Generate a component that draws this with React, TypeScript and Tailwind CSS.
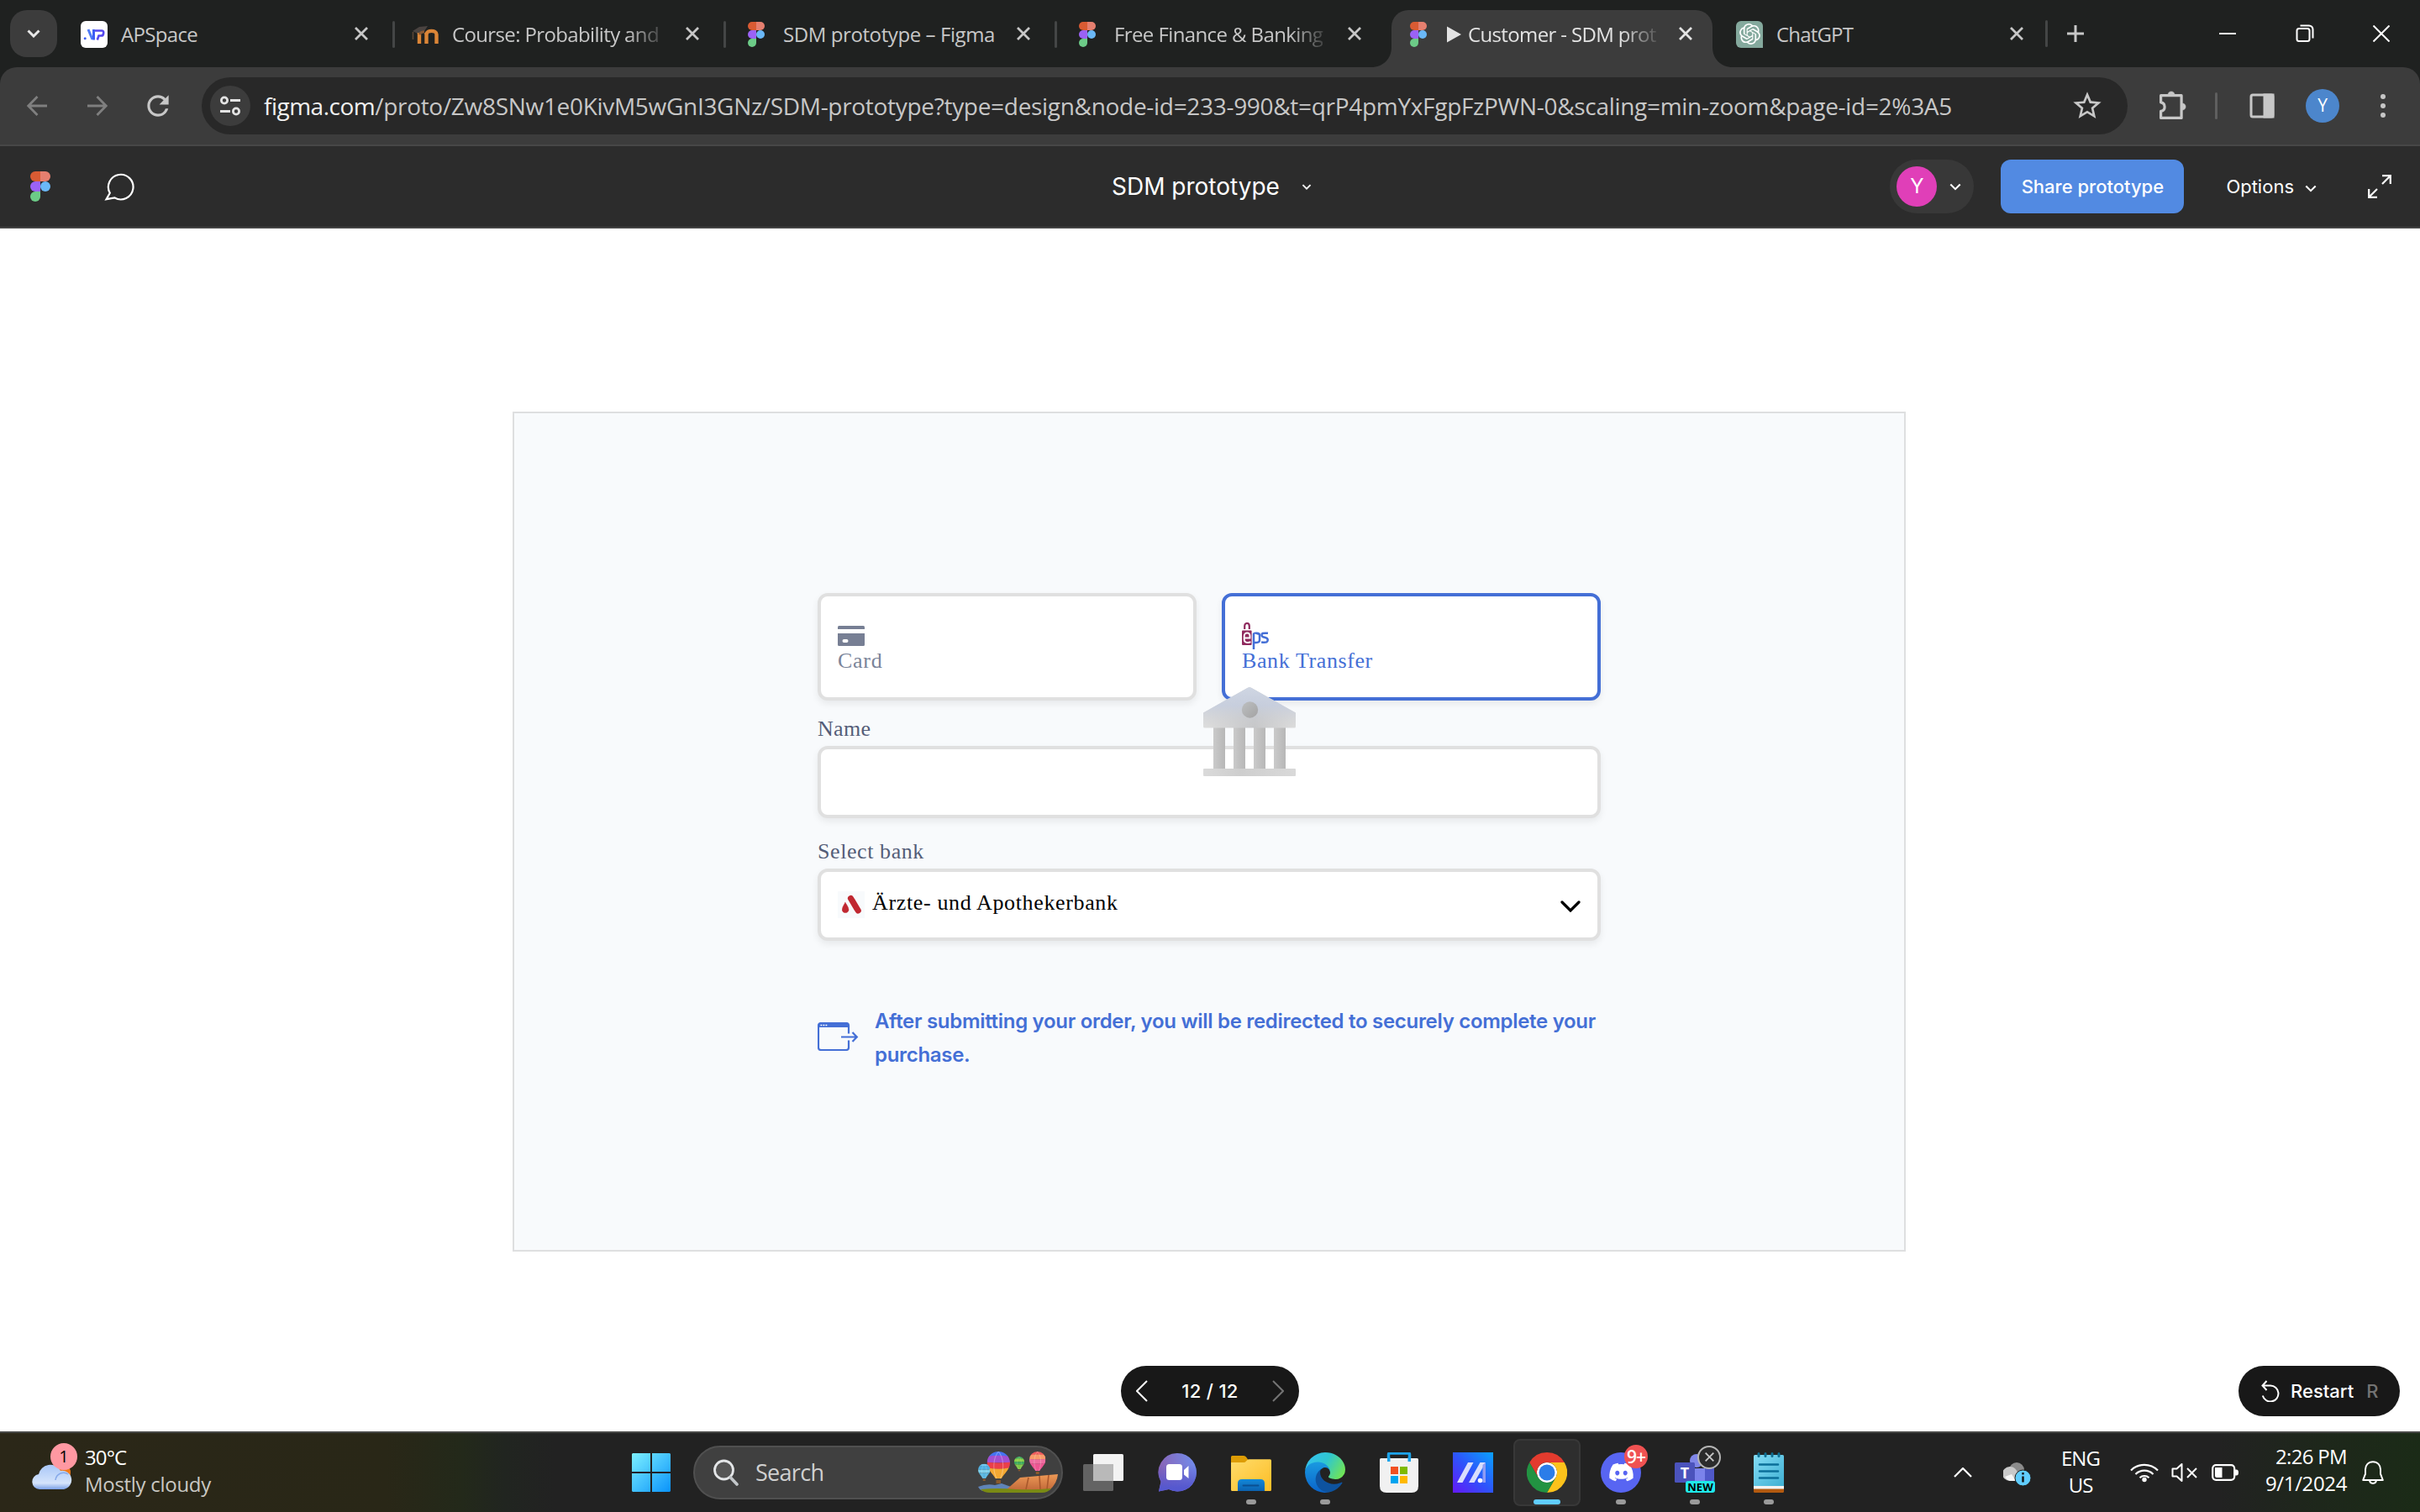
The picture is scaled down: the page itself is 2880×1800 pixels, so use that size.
import type { ReactNode } from "react";
import { SiOpenai } from "react-icons/si";
import { FaDiscord } from "react-icons/fa";
import { MdStarBorder, MdRefresh } from "react-icons/md";

function FigmaLogo({ className = "" }: { className?: string }) {
  return (
    <svg viewBox="0 0 20 30" className={className}>
      <path d="M5 0h5v10H5A5 5 0 0 1 5 0z" fill="#d95b33" />
      <path d="M10 0h5a5 5 0 0 1 0 10h-5z" fill="#e57f6f" />
      <path d="M5 10h5v10H5a5 5 0 0 1 0-10z" fill="#9b62f5" />
      <circle cx="15" cy="15" r="5" fill="#6ab8f7" />
      <path d="M5 20h5v5a5 5 0 1 1-5-5z" fill="#6ccb87" />
    </svg>
  );
}

function ApIcon() {
  return (
    <span className="flex h-8 w-8 items-center justify-center rounded-md bg-white">
      <svg viewBox="0 0 32 32" className="h-8 w-8" fill="none" strokeWidth="3">
        <circle cx="5.2" cy="20.800" r="1.500" fill="#3d5ef5" />
        <path d="M9 10L14 22" stroke="#4f7bf7" />
        <path d="M15.500 10v12.500" stroke="#3d5ef5" />
        <path d="M17 11.500h8.500c2.600 0 2.200 6-.8 6h-3.200L19.800 22.500" stroke="#5548ee" strokeWidth="2.600" />
      </svg>
    </span>
  );
}

function MoodleIcon() {
  return (
    <svg viewBox="0 0 32 32" className="h-8 w-8" fill="none">
      <path d="M1 12L9 7l10-1-4 6-8 3z" fill="#4a4340" />
      <path d="M1.500 13v9" stroke="#5b4636" strokeWidth="1.600" />
      <path d="M9 27V14M17.500 27V14" stroke="#db8537" strokeWidth="4.400" />
      <path d="M9 16q2-3.500 6-3" stroke="#8a5a35" strokeWidth="3" />
      <path d="M17.500 16c0-5.500 12-5.500 12 0v11" stroke="#db8537" strokeWidth="4.400" />
    </svg>
  );
}

function OpenAiIcon() {
  return (
    <span className="flex h-8 w-8 items-center justify-center rounded-md rounded-br-none bg-[#84a99d] text-[25px] text-white">
      <SiOpenai />
    </span>
  );
}

function Cross({ className = "" }: { className?: string }) {
  return (
    <svg viewBox="0 0 16 16" className={className} stroke="currentColor" strokeWidth="2.800" fill="none">
      <path d="M1 1l14 14M15 1L1 15" />
    </svg>
  );
}

function Chevron({ className = "", sw = 2 }: { className?: string; sw?: number }) {
  return (
    <svg viewBox="0 0 16 10" className={className} stroke="currentColor" strokeWidth={sw} fill="none">
      <path d="M1.500 1.500L8 8l6.500-6.500" />
    </svg>
  );
}

function TabFoot({ className = "" }: { className?: string }) {
  return (
    <svg viewBox="0 0 24 24" className={className} fill="#3c3c3c">
      <path d="M24 0v24H0C14 24 24 14 24 0z" />
    </svg>
  );
}

type TabProps = { icon: ReactNode; label: ReactNode; track: string; active?: boolean; fade?: boolean; sep?: boolean };

function Tab({ icon, label, track, active = false, fade = false, sep = false }: TabProps) {
  return (
    <>
      <div
        className={
          "relative flex h-[68px] w-[382px] shrink-0 items-start rounded-t-[20px] pl-4 " +
          (active ? "bg-[#3c3c3c] text-[#e3e3e3]" : "text-[#c7c7c7]")
        }
      >
        {active && <TabFoot className="absolute bottom-0 -left-6 h-6 w-6" />}
        {active && <TabFoot className="absolute -right-6 bottom-0 h-6 w-6 -scale-x-100" />}
        <span className="flex h-[57px] w-8 items-center justify-center">{icon}</span>
        <span
          className={
            "ml-4 w-[254px] text-[24px] leading-[58px] whitespace-nowrap " +
            track +
            (fade ? " [mask-image:linear-gradient(to_right,black_82%,transparent_102%)]" : "")
          }
        >
          {label}
        </span>
        <span className="ml-5 flex h-14 w-6 items-center justify-center">
          <Cross className="h-4 w-4" />
        </span>
      </div>
      <span className="flex h-[57px] w-3 shrink-0 items-center justify-center">
        {sep && <span className="h-8 w-[3px] rounded-full bg-[#444646]" />}
      </span>
    </>
  );
}

function TabStrip() {
  return (
    <div className="flex h-20 bg-[#1f2120] pt-3 pl-3">
      <div className="mr-3 flex h-14 w-14 shrink-0 items-center justify-center rounded-[20px] bg-[#3c3c3c] text-[#e8e8e8]">
        <Chevron className="h-[10px] w-4" sw={3} />
      </div>
      <Tab icon={<ApIcon />} label="APSpace" track="tracking-[-0.680px]" sep />
      <Tab icon={<MoodleIcon />} label="Course: Probability and" track="tracking-[-0.640px]" fade sep />
      <Tab icon={<FigmaLogo className="h-[30px] w-5" />} label="SDM prototype – Figma" track="tracking-[-0.410px]" sep />
      <Tab icon={<FigmaLogo className="h-[30px] w-5" />} label="Free Finance & Banking" track="tracking-[-0.600px]" fade />
      <Tab
        icon={<FigmaLogo className="h-[30px] w-5" />}
        label={
          <span className="flex items-center">
            <svg viewBox="0 0 18 20" className="mr-[8px] ml-[2px] h-5 w-[17px] shrink-0" fill="currentColor">
              <path d="M0 0l18 10L0 20z" />
            </svg>
            Customer - SDM prot
          </span>
        }
        track="tracking-[-0.640px]"
        active
        fade
      />
      <div className="-mr-[2px] flex">
        <Tab icon={<OpenAiIcon />} label="ChatGPT" track="tracking-[-0.830px]" />
      </div>
      <span className="-ml-[8px] mt-3 h-8 w-[3px] rounded-full bg-[#444646]" />
      <span className="flex h-14 w-[66px] items-center justify-center text-[#c7c7c7]">
        <svg viewBox="0 0 20 20" className="h-5 w-5" stroke="currentColor" strokeWidth="3">
          <path d="M10 0v20M0 10h20" />
        </svg>
      </span>
      <div className="ml-auto flex h-14 items-center text-white">
        <svg viewBox="0 0 20 20" className="mr-[71px] h-5 w-5" stroke="currentColor" strokeWidth="2">
          <path d="M0 10h20" />
        </svg>
        <svg viewBox="0 0 22 22" className="mr-[70px] h-[22px] w-[22px]" stroke="currentColor" strokeWidth="2" fill="none">
          <rect x="1.500" y="5" width="15" height="15" rx="2.500" />
          <path d="M5.500 1.500h10.500a4.500 4.500 0 0 1 4.500 4.500v10.500" />
        </svg>
        <svg viewBox="0 0 20 20" className="mr-9 h-5 w-5" stroke="currentColor" strokeWidth="2">
          <path d="M.5.5l19 19M19.500.5l-19 19" />
        </svg>
      </div>
    </div>
  );
}

function Toolbar() {
  return (
    <div className="bg-[#1f2120]">
      <div className="flex h-[94px] items-start rounded-t-[20px] border-b-2 border-[#474747] bg-[#3c3c3c] pt-3">
        <div className="flex h-[68px] w-[240px] items-center pl-8 text-[#c7c7c7]">
          <svg viewBox="0 0 24 24" className="h-6 w-6 text-[#7f7f7f]" stroke="currentColor" strokeWidth="2.800" fill="none">
            <path d="M24 12H2M12.500 1L1.800 12l10.700 11" />
          </svg>
          <svg viewBox="0 0 24 24" className="ml-12 h-6 w-6 text-[#7f7f7f]" stroke="currentColor" strokeWidth="2.800" fill="none">
            <path d="M0 12h22M11.500 1l10.700 11-10.700 11" />
          </svg>
          <MdRefresh className="ml-[41px] h-[38px] w-[38px]" />
        </div>
        <div className="flex h-[68px] w-[2292px] items-center rounded-full bg-[#282828] pl-[10px]">
          <span className="flex h-12 w-12 items-center justify-center rounded-full bg-[#3c3c3c]">
            <svg viewBox="0 0 24 24" className="h-6 w-6" stroke="#e3e3e3" strokeWidth="2.800" fill="none">
              <circle cx="5" cy="5.500" r="3.600" />
              <path d="M12 5.500h12M0 18.500h12" />
              <circle cx="19" cy="18.500" r="3.600" />
            </svg>
          </span>
          <span className="ml-4 text-[28px] leading-[68px] tracking-[-0.306px] whitespace-nowrap text-[#c7c7c7]">
            <span className="tracking-[-0.500px] text-[#f0f0f0]">figma.com</span>
            /proto/Zw8SNw1e0KivM5wGnI3GNz/SDM-prototype?type=design&amp;node-id=233-990&amp;t=qrP4pmYxFgpFzPWN-0&amp;scaling=min-zoom&amp;page-id=2%3A5
          </span>
          <MdStarBorder className="mr-[28px] ml-auto h-10 w-10 text-[#c7c7c7]" />
        </div>
        <div className="flex h-[68px] flex-1 items-center text-[#c7c7c7]">
          <svg viewBox="0 0 36 36" className="ml-[36px] h-9 w-9" stroke="currentColor" strokeWidth="3.200" fill="none">
            <path d="M3.600 5.700h24.500v26.700H3.600v-8c6-1 6-9.500 0-10.500z" strokeLinejoin="round" />
            <path d="M12 5c0-5.500 8-5.500 8 0zM29 15c5.500 0 5.500 8 0 8z" fill="currentColor" strokeWidth="0.500" />
          </svg>
          <span className="ml-8 h-8 w-[3px] rounded-full bg-[#5f5f5f]" />
          <svg viewBox="0 0 30 30" className="ml-[38px] h-[30px] w-[30px]" fill="none" stroke="currentColor" strokeWidth="3">
            <rect x="2" y="2" width="26" height="26" rx="2" />
            <path d="M18 2h10v26H18z" fill="currentColor" />
          </svg>
          <span className="ml-[37px] flex h-10 w-10 items-center justify-center rounded-full bg-[#4c86cc] text-[21px] text-white">Y</span>
          <span className="ml-[49px] flex flex-col gap-[5px]">
            <span className="h-[6px] w-[6px] rounded-full bg-current" />
            <span className="h-[6px] w-[6px] rounded-full bg-current" />
            <span className="h-[6px] w-[6px] rounded-full bg-current" />
          </span>
        </div>
      </div>
    </div>
  );
}

function FigmaHeader() {
  return (
    <div className="flex h-[98px] items-center border-b-2 border-[#444] bg-[#2c2c2c] font-['Inter',sans-serif] text-white">
      <div className="flex w-[1323px] items-center pl-9">
        <FigmaLogo className="h-9 w-6" />
        <svg viewBox="0 0 36 36" className="ml-[64px] h-9 w-9" fill="none" stroke="currentColor" strokeWidth="2.200">
          <path d="M2.500 33.200l4.300-7.400A14.800 14.800 0 1 1 12.500 31.500z" strokeLinejoin="miter" />
        </svg>
      </div>
      <span className="text-[28px] leading-[32px]">SDM prototype</span>
      <Chevron className="ml-[26px] h-[7px] w-[12px]" sw={2.6} />
      <div className="ml-auto flex items-center">
        <div className="flex h-16 w-[100px] items-center rounded-full bg-[#383838] pl-2">
          <span className="flex h-12 w-12 items-center justify-center rounded-full bg-[#e03fb8] text-[24px]">Y</span>
          <Chevron className="ml-[15px] h-[9px] w-[14px]" sw={2.4} />
        </div>
        <div className="ml-8 flex h-16 w-[218px] items-center justify-center rounded-xl bg-[#528ae2] text-[22px] leading-8 font-medium">
          Share prototype
        </div>
        <span className="ml-[50px] text-[22px] leading-8">Options</span>
        <Chevron className="mt-[4px] ml-[13px] h-[9px] w-[14px]" sw={2.4} />
        <svg viewBox="0 0 28 28" className="mr-[34px] ml-[61px] h-7 w-7" fill="none" stroke="currentColor" strokeWidth="2.200">
          <path d="M17 1.200h9.800V11M26.800 1.200L17 11M11 26.800H1.200V17M1.200 26.800L11 17" />
        </svg>
      </div>
    </div>
  );
}

function EpsLogo() {
  return (
    <svg viewBox="0 0 32 32" className="h-8 w-8" fill="none">
      <path d="M3.200 8V4.500C3.200-.2 8.800-.2 8.800 4.500V8" stroke="#8f2a5e" strokeWidth="2.200" />
      <rect x="0" y="9.500" width="11.600" height="17.500" rx="1" fill="#8f2a5e" />
      <path d="M3.200 18.500h6.300v-2.300c0-5-6.800-5-6.800 0v4c0 4.600 5 4.300 7.800 3" stroke="#fff" strokeWidth="1.900" />
      <path d="M14 32V13.500c0-1 7-1.400 7 1.500v6c0 3-3 3.200-6.500 2.800" stroke="#446fd6" strokeWidth="2.500" />
      <path d="M31 12.800c-7-.6-7.500.4-7.500 2.400 0 3.600 7.200 1.500 7.200 5.400 0 3-1 3.600-7.600 3" stroke="#446fd6" strokeWidth="2.500" />
    </svg>
  );
}

function BankIcon({ className = "" }: { className?: string }) {
  return (
    <svg viewBox="0 0 110 106" className={className}>
      <defs>
        <linearGradient id="roofBase" x1="0" x2="1" y1="0" y2="0">
          <stop offset="0" stopColor="#dedede" />
          <stop offset=".55" stopColor="#c6c7c9" />
          <stop offset="1" stopColor="#dcdcdc" />
        </linearGradient>
        <linearGradient id="roofSky" x1="0" x2="0" y1="0" y2="1">
          <stop offset="0" stopColor="#cfd6e3" />
          <stop offset=".45" stopColor="#c6cedf" stopOpacity=".85" />
          <stop offset="1" stopColor="#cfcfcf" stopOpacity="0" />
        </linearGradient>
        <linearGradient id="pillar" x1="0" x2="1" y1="0" y2="0">
          <stop offset="0" stopColor="#cacaca" />
          <stop offset="1" stopColor="#b7b7b7" />
        </linearGradient>
        <linearGradient id="plinth" x1="0" x2="1" y1="0" y2="0">
          <stop offset="0" stopColor="#dadada" />
          <stop offset=".4" stopColor="#cecece" />
          <stop offset="1" stopColor="#d9d9d9" />
        </linearGradient>
        <linearGradient id="knob" x1="0" x2="1" y1="0" y2="1">
          <stop offset="0" stopColor="#bdbfc1" />
          <stop offset="1" stopColor="#a3a3a3" />
        </linearGradient>
      </defs>
      <g fill="url(#pillar)">
        <path d="M12 48h14v49H12z" />
        <path d="M36 48h14v49H36z" />
        <path d="M60 48h14v49H60z" />
        <path d="M84 48h14v49H84z" />
      </g>
      <path d="M0 30.500L53 .800q2-1 4 0L110 30.500V47q0 1.500-1.500 1.500h-107Q0 48.500 0 47z" fill="url(#roofBase)" />
      <path d="M0 30.500L53 .800q2-1 4 0L110 30.500V47q0 1.500-1.500 1.500h-107Q0 48.500 0 47z" fill="url(#roofSky)" />
      <circle cx="55.500" cy="27" r="9.700" fill="url(#knob)" />
      <rect x="0" y="97" width="110" height="9" rx="1" fill="url(#plinth)" />
    </svg>
  );
}

function Payment() {
  return (
    <div className="mx-auto mt-[218px] h-[1000px] w-[1658px] translate-x-[-1px] border-2 border-[#dedfe0] bg-[#f8fafc] pt-[214px] pl-[361px] font-['Liberation_Serif',serif]">
      <div className="relative w-[932px]">
        <div className="flex justify-between">
          <div className="h-32 w-[451px] rounded-xl border-4 border-[#e0e0e0] bg-white pt-[35px] pl-5 shadow-[0_4px_8px_rgba(0,0,0,0.07)]">
            <svg viewBox="0 0 32 24" className="h-6 w-8" fill="#777f94">
              <path d="M1.500 0h29Q32 0 32 1.500V4H0V1.500Q0 0 1.500 0z" />
              <path fillRule="evenodd" d="M0 9h32v13.500q0 1.500-1.500 1.500h-29Q0 24 0 22.500zM7.500 16a2 2 0 0 0 0 4h3a2 2 0 0 0 0-4z" />
            </svg>
            <div className="mt-[2px] text-[26px] leading-8 tracking-[0.700px] text-[#7a8499]">Card</div>
          </div>
          <div className="h-32 w-[451px] rounded-xl border-4 border-[#446fd6] bg-white pt-[31px] pl-5 shadow-[0_4px_8px_rgba(0,0,0,0.07)]">
            <EpsLogo />
            <div className="-mt-[2px] text-[26px] leading-8 tracking-[0.600px] text-[#446fd6]">Bank Transfer</div>
          </div>
        </div>
        <div className="mt-[18px] text-[26px] leading-8 tracking-[0.300px] text-[#545d78]">Name</div>
        <div className="mt-[4px] h-[86px] rounded-xl border-4 border-[#e0e0e0] bg-white shadow-[0_4px_8px_rgba(0,0,0,0.07)]" />
        <BankIcon className="absolute top-[112px] left-[459px] h-[106px] w-[110px]" />
        <div className="mt-[24px] text-[26px] leading-8 tracking-[0.580px] text-[#545d78]">Select bank</div>
        <div className="mt-[4px] flex h-[86px] items-center rounded-xl border-4 border-[#e0e0e0] bg-white pr-5 pl-5 shadow-[0_4px_8px_rgba(0,0,0,0.07)]">
          <span className="flex h-8 w-8 items-center justify-center bg-[#f8fafc]">
            <svg viewBox="0 0 24 24" className="ml-px h-6 w-6" fill="none" stroke="#c02831" strokeLinecap="round">
              <path d="M10.500 4.500L19.200 19" strokeWidth="7.200" />
              <path d="M3.900 9.500q4.100 5.500 4.100 9a4 4 0 0 1-7.800 0q0-3.500 3.700-9z" fill="#c02831" strokeWidth="0.500" />
            </svg>
          </span>
          <span className="mb-[4px] ml-[9px] text-[26px] leading-8 tracking-[0.640px] text-black">Ärzte- und Apothekerbank</span>
          <svg viewBox="0 0 24 14" className="mt-[4px] ml-auto h-[14px] w-6" fill="none" stroke="#000" strokeWidth="3.200" strokeLinecap="round">
            <path d="M2 2l10 10L22 2" />
          </svg>
        </div>
        <div className="mt-[76px] flex items-start">
          <svg viewBox="0 0 50 34" className="mt-[21px] h-[34px] w-[50px] shrink-0" fill="none" stroke="#446fd6" strokeWidth="2.200">
            <path d="M37 13.500V4q0-3-3-3H4Q1 1 1 4v26q0 3 3 3h30q3 0 3-3v-8.500" />
            <path d="M1 1.500h36V6H1z" fill="#446fd6" strokeWidth="0" />
            <path d="M3.500 3.500h1.800M6.500 3.500h1.800M9.500 3.500h1.800" stroke="#fff" strokeWidth="1.600" />
            <path d="M28 17.500h18.500M41.500 12l5.300 5.500-5.300 5.500" />
          </svg>
          <p className="ml-[18px] font-['Inter',sans-serif] text-[24px] leading-10 font-semibold tracking-[-0.300px] whitespace-nowrap text-[#446fd6]">
            After submitting your order, you will be redirected to securely complete your
            <br />
            purchase.
          </p>
        </div>
      </div>
    </div>
  );
}

function Controls() {
  return (
    <div className="mt-auto mb-[18px] flex justify-between pr-6 font-['Inter',sans-serif] text-[22px] leading-[60px] font-medium text-white">
      <div className="ml-[1334px] flex h-[60px] w-[212px] items-center rounded-full bg-[#181818] px-[18px]">
        <svg viewBox="0 0 14 26" className="h-[26px] w-[14px]" stroke="#fff" strokeWidth="2" fill="none">
          <path d="M13 1L1 13l12 12" />
        </svg>
        <span className="mx-auto tracking-[0.300px]">12 / 12</span>
        <svg viewBox="0 0 14 26" className="h-[26px] w-[14px] -scale-x-100" stroke="#737373" strokeWidth="2" fill="none">
          <path d="M13 1L1 13l12 12" />
        </svg>
      </div>
      <div className="flex h-[60px] w-[192px] items-center rounded-full bg-[#181818] pl-[27px]">
        <svg viewBox="0 0 22 26" className="h-[26px] w-[22px]" stroke="#fff" strokeWidth="2" fill="none">
          <path d="M6.500 1L1.500 6.500l5 5.500M1.500 6.500h9.500a9.500 9.500 0 1 1-9.200 12" />
        </svg>
        <span className="ml-[13px]">Restart</span>
        <span className="ml-[15px] text-[#737373]">R</span>
      </div>
    </div>
  );
}

function WeatherIcon() {
  return (
    <svg viewBox="0 0 56 56" className="h-14 w-14" fill="none">
      <defs>
        <linearGradient id="cloud" x1="0" x2="0" y1="0" y2="1">
          <stop offset="0" stopColor="#a9c7f8" />
          <stop offset=".75" stopColor="#d5e4fb" />
          <stop offset="1" stopColor="#7ba0e6" />
        </linearGradient>
      </defs>
      <circle cx="34" cy="34" r="12" fill="#f07a1a" />
      <path d="M9 54a9 9 0 0 1-1-17.900A14 14 0 0 1 34 32a11 11 0 0 1 4 22z" fill="url(#cloud)" />
      <path d="M28 43c1-8 10-11 15-7" stroke="#86a9ea" strokeWidth="1.500" />
    </svg>
  );
}

type BalloonProps = { id: string; x: number; y: number; w: number; h: number; bands: string[] };

function Balloon({ id, x, y, w, h, bands }: BalloonProps) {
  return (
    <svg x={x} y={y} width={w} height={h} viewBox="0 0 20 28" preserveAspectRatio="none">
      <clipPath id={id}>
        <path d="M10 0a10 10 0 0 1 10 10c0 6-5 9-7.500 14h-5C5 19 0 16 0 10A10 10 0 0 1 10 0z" />
      </clipPath>
      <g clipPath={`url(#${id})`}>
        <path d="M0 0h20v4.800q-10-2-20 0z" fill={bands[0]} />
        <path d="M0 4.500q10-2 20 0v5q-10 1-20 0z" fill={bands[1]} />
        <path d="M0 9.400q10 1 20 0v5q-10 2-20 0z" fill={bands[2]} />
        <path d="M0 14.200q10 2 20 0V24H0z" fill={bands[3]} />
        <path d="M10 0c-5 6-5 17-1.500 24M10 0c5 6 5 17 1.500 24" stroke="#fff" strokeOpacity=".3" strokeWidth=".8" fill="none" />
      </g>
      <path d="M8 25h4v3H8z" fill="#8a5a2c" />
    </svg>
  );
}

function BalloonScene() {
  return (
    <svg viewBox="0 0 96 50" className="h-[50px] w-24">
      <defs>
        <linearGradient id="mesa" x1="0" y1="0" x2="0" y2="1">
          <stop offset="0" stopColor="#ee9a56" />
          <stop offset="1" stopColor="#c2693a" />
        </linearGradient>
      </defs>
      <path d="M0 42q10-4 20-2l8-2 14 5-4 4H5Q2 46 0 42z" fill="#5f84b8" />
      <path d="M33 46l17-15 45-4q-1 11-10 19z" fill="url(#mesa)" />
      <path d="M60 31l-3 14M73 29l1 16M84 28l-2 17" stroke="#a9582c" strokeWidth="1.600" />
      <path d="M3 45q20-2 42 0 22 1 42-1-4 5-11 5H14Q7 49 3 45z" fill="#7a8a14" />
      <Balloon id="balloonMain" x={10.500} y={0} w={27.500} h={38} bands={["#4573f2", "#a34fd0", "#ea3f4b", "#f3a832"]} />
      <Balloon id="balloonLeft" x={0} y={14.500} w={14.500} h={20.500} bands={["#69c4ee", "#4fb0e2", "#7fd0ea", "#58b6df"]} />
      <Balloon id="balloonGreen" x={43} y={6} w={12} h={17.500} bands={["#3fae5e", "#8bd04a", "#3fae5e", "#7ec645"]} />
      <Balloon id="balloonPink" x={61} y={0} w={19.500} h={27} bands={["#ef5a5c", "#f89a6a", "#ef6da0", "#ee5592"]} />
    </svg>
  );
}

function EdgeIcon() {
  return (
    <svg viewBox="0 0 256 256" className="h-12 w-12">
      <defs>
        <linearGradient id="edgeGreen" x1="0" x2="1" y1="0.200" y2="0.600">
          <stop offset="0" stopColor="#35c1f1" />
          <stop offset=".5" stopColor="#2fc6d0" />
          <stop offset="1" stopColor="#6ee35a" />
        </linearGradient>
        <linearGradient id="edgeBlue" x1="0" x2="0" y1="0" y2="1">
          <stop offset="0" stopColor="#1b9de2" />
          <stop offset="1" stopColor="#0a63c9" />
        </linearGradient>
      </defs>
      <path d="M231 190.500c-3.400 1.800-6.900 3.400-10.500 4.700a101.500 101.500 0 0 1-35.900 6.400c-47.300 0-88.500-32.500-88.500-74.300a31.500 31.500 0 0 1 16.400-27.300c-42.800 1.800-53.800 46.400-53.800 72.500 0 73.900 68.100 81.400 82.800 81.400 7.900 0 19.800-2.300 27-4.600l1.300-.4a128.300 128.300 0 0 0 66.600-52.800 4 4 0 0 0-5.400-5.600z" fill="#0e539f" />
      <path d="M105.700 241.400a79.200 79.200 0 0 1-22.700-21.300 80.700 80.700 0 0 1 29.500-120c3.200-1.500 8.500-4.100 15.600-4a32.400 32.400 0 0 1 25.700 13 31.900 31.900 0 0 1 6.300 18.700c0-.2 24.500-79.600-80-79.600-43.900 0-80 41.600-80 78.200a130.200 130.200 0 0 0 12.100 56 128 128 0 0 0 156.400 67 75.500 75.500 0 0 1-62.800-8z" fill="url(#edgeBlue)" />
      <path d="M152.300 148.900c-.9 1-3.400 2.500-3.400 5.600 0 2.600 1.700 5.200 4.800 7.300 14.300 10 41.400 8.600 41.500 8.600a59.600 59.600 0 0 0 30.300-8.300 61.400 61.400 0 0 0 30.400-52.900c.3-22.400-8-37.300-11.300-43.900C223.500 23.900 177.700.5 128 .5A128 128 0 0 0 0 126.700c.5-36.500 36.800-66 80-66 3.500 0 23.500.3 42 10.100 16.300 8.600 24.900 19 30.800 29.200 6.200 10.700 7.300 24.100 7.300 29.500 0 5.300-2.700 13.300-7.800 19.400z" fill="url(#edgeGreen)" />
    </svg>
  );
}

function ChromeIcon() {
  return (
    <svg viewBox="0 0 48 48" className="h-12 w-12">
      <circle cx="24" cy="24" r="12" fill="#fff" />
      <path d="M24 12H44.781a23.994 23.994 0 0 0-41.564.003L13.608 30l.009-.002A11.985 11.985 0 0 1 24 12z" fill="#e33b2e" />
      <path d="M34.391 30.003L24.001 48A23.994 23.994 0 0 0 44.780 12.003H23.999l-.003.009A11.985 11.985 0 0 1 34.391 30.003z" fill="#fcc21b" />
      <path d="M13.609 30.003L3.218 12.006A23.994 23.994 0 0 0 24.003 48L34.393 30.003l-.007-.007a11.985 11.985 0 0 1-20.778.007z" fill="#229342" />
      <circle cx="24" cy="24" r="9.500" fill="#2b7de9" />
    </svg>
  );
}

function StartIcon() {
  return (
    <svg viewBox="0 0 46 46" className="h-[46px] w-[46px]">
      <defs>
        <linearGradient id="win" x1="0" y1="0" x2="46" y2="46" gradientUnits="userSpaceOnUse">
          <stop offset="0" stopColor="#7cf0ff" />
          <stop offset="1" stopColor="#0a93fb" />
        </linearGradient>
      </defs>
      <path d="M1 0h21v22H0V1zM24 0h21l1 1v21H24zM0 24h22v22H1l-1-1zM24 24h22v21l-1 1H24z" fill="url(#win)" />
    </svg>
  );
}

function TaskViewIcon() {
  return (
    <svg viewBox="0 0 48 44" className="h-11 w-12">
      <rect x="12" y="0" width="36" height="32" rx="1.500" fill="#f3f3f3" />
      <rect x="0" y="12" width="36" height="32" rx="1.500" fill="#6a6a6a" fillOpacity=".9" />
      <path d="M12 12h24v20H12z" fill="#b9b9b9" />
    </svg>
  );
}

function ChatIcon() {
  return (
    <svg viewBox="0 0 46 46" className="h-[46px] w-[46px]">
      <defs>
        <linearGradient id="chat" x1="0" y1="0.300" x2="1" y2="0">
          <stop offset="0" stopColor="#8a63b5" />
          <stop offset="1" stopColor="#6f8ff0" />
        </linearGradient>
        <linearGradient id="chatLow" x1="0" y1="0" x2="0" y2="1">
          <stop offset=".3" stopColor="#5558cf" stopOpacity="0" />
          <stop offset=".9" stopColor="#5558cf" />
        </linearGradient>
      </defs>
      <path d="M23.500 0A22.500 22.800 0 1 1 13 43L1 45.500 3.500 34A22.500 22.800 0 0 1 23.500 0z" fill="url(#chat)" />
      <path d="M23.500 0A22.500 22.800 0 1 1 13 43L1 45.500 3.500 34A22.500 22.800 0 0 1 23.500 0z" fill="url(#chatLow)" />
      <rect x="10" y="13" width="19" height="19" rx="3.500" fill="#fff" />
      <path d="M31 20l5.500-5v15L31 25.500z" fill="#fff" />
    </svg>
  );
}

function FolderIcon() {
  return (
    <svg viewBox="0 0 48 42" className="mt-[2px] h-[42px] w-12">
      <defs>
        <linearGradient id="folder" x1="0" y1="0" x2="1" y2="1">
          <stop offset="0" stopColor="#ffdc6b" />
          <stop offset="1" stopColor="#fdbd25" />
        </linearGradient>
        <linearGradient id="folderBlue" x1="0" y1="0" x2="0" y2="1">
          <stop offset="0" stopColor="#1288d8" />
          <stop offset="1" stopColor="#0b62b0" />
        </linearGradient>
      </defs>
      <path d="M1.500 0H15q2 0 3 1.500L20.500 5v9H0V1.500Q0 0 1.500 0z" fill="#dd9c05" />
      <path d="M0 8h15q2 0 3-1.500L19.500 5q.5-.8 2-.8h25q1.500 0 1.500 1.500v34.800Q48 42 46.500 42h-45Q0 42 0 40.500z" fill="url(#folder)" />
      <path d="M8 42V33q0-5 5-5h22q5 0 5 5v9z" fill="url(#folderBlue)" />
      <path d="M14.500 35.500h18" stroke="#0a4f91" strokeWidth="2" strokeLinecap="round" />
    </svg>
  );
}

function StoreIcon() {
  return (
    <svg viewBox="0 0 46 48" className="h-12 w-[46px]">
      <path d="M10.500 12V2.500q0-1.500 1.500-1.500h22q1.500 0 1.500 1.500V12" fill="none" stroke="#1ea4ea" strokeWidth="3.500" />
      <path d="M1.500 7h43Q46 7 46 8.500V40q0 8-8 8H8q-8 0-8-8V8.500Q0 7 1.500 7z" fill="#f1f1f1" />
      <path d="M9 11V6h3.500v5M33.500 11V6H37v5" fill="#1ea4ea" />
      <path d="M13 17h9v9h-9z" fill="#f25022" />
      <path d="M24 17h9v9h-9z" fill="#7fba00" />
      <path d="M13 28h9v9h-9z" fill="#00a4ef" />
      <path d="M24 28h9v9h-9z" fill="#ffb900" />
    </svg>
  );
}

function MyAsusIcon() {
  return (
    <svg viewBox="0 0 48 48" className="h-12 w-12">
      <defs>
        <linearGradient id="asus" x1="0" y1="1" x2="1" y2="0">
          <stop offset="0" stopColor="#6418f7" />
          <stop offset=".5" stopColor="#2d55fb" />
          <stop offset="1" stopColor="#0aa2fd" />
        </linearGradient>
      </defs>
      <path d="M0 0h48v48H0z" fill="url(#asus)" />
      <path d="M5 36L18 12h6.500L11.500 36zM19 36L32.500 12H39L25.500 36z" fill="#d9defc" />
      <path d="M35.500 15L39 12v24h-3.500z" fill="#8f9cf5" />
      <circle cx="32.500" cy="33.500" r="2.800" fill="#fff" />
    </svg>
  );
}

function TeamsIcon() {
  return (
    <span className="relative block h-12 w-14">
      <svg viewBox="0 0 56 48" className="h-12 w-14">
        <circle cx="26" cy="10" r="8" fill="#7f86e8" />
        <path d="M22 19h15v21H22z" fill="#7b83eb" />
        <path d="M36 19h11v13q0 8-11 8z" fill="#5059c9" />
        <rect x="0" y="12" width="24" height="24" rx="1.500" fill="#4b53bc" />
      </svg>
      <span className="absolute top-3 left-0 flex h-6 w-6 items-center justify-center text-[18px] leading-6 font-bold text-white">T</span>
      <span className="absolute top-[34px] left-[13px] flex h-[14px] w-[35px] items-center justify-center rounded-[3px] bg-[#1fe9ea] text-[13px] leading-[14px] font-bold text-black">
        NEW
      </span>
      <span className="absolute -top-2 left-[27px] flex h-7 w-7 items-center justify-center rounded-full border-2 border-[#b5b5b5] bg-[#2b2b2b] text-[#c7c7c7]">
        <Cross className="h-[11px] w-[11px]" />
      </span>
    </span>
  );
}

function NotepadIcon() {
  return (
    <svg viewBox="0 0 36 48" className="h-12 w-9">
      <defs>
        <linearGradient id="note" x1="0" y1="0" x2="1" y2="1">
          <stop offset="0" stopColor="#84dcf5" />
          <stop offset="1" stopColor="#3fb0d3" />
        </linearGradient>
      </defs>
      <path d="M0 42h36v4.500q0 1.500-1.500 1.500h-33Q0 48 0 46.500z" fill="#b35a10" />
      <path d="M0 38h36v5.500H0z" fill="#f3f3f3" />
      <path d="M1.500 3h33Q36 3 36 4.500V40H0V4.500Q0 3 1.500 3z" fill="url(#note)" />
      <path d="M6 1.500v3M14 1.500v3M22 1.500v3M30 1.500v3" stroke="#0f6f92" strokeWidth="3" strokeLinecap="round" />
      <path d="M7 14.500h22M7 22.500h22M7 30.500h22" stroke="#0b6f99" strokeWidth="2.600" strokeLinecap="round" />
    </svg>
  );
}

function TaskButton({ children, mark = "none" }: { children: ReactNode; mark?: "none" | "dot" | "active" }) {
  return (
    <div
      className={
        "relative flex h-20 w-20 shrink-0 items-center justify-center rounded-lg " +
        (mark === "active" ? "border-2 border-[#383838] bg-[#2e2e2e]" : "")
      }
    >
      {children}
      {mark === "dot" && <span className="absolute bottom-[2px] left-[34px] h-[6px] w-3 rounded-full bg-[#9a9a9a]" />}
      {mark === "active" && <span className="absolute bottom-0 left-[22px] h-[6px] w-8 rounded-full bg-[#60cdff]" />}
    </div>
  );
}

function Taskbar() {
  return (
    <div className="flex h-24 items-center border-t-2 border-[#474846] bg-[linear-gradient(to_right,#2b2718_0,#292717_460px,#23291a_550px,#212520_600px,#222222_660px,#222222_2640px,#1e271b_2760px,#1b2b17_2880px)] pb-px whitespace-nowrap">
      <div className="flex w-[735px] items-center">
        <div className="relative ml-[38px] h-14 w-14 -translate-y-[6px]">
          <WeatherIcon />
          <span className="absolute -top-[1px] left-[22px] flex h-8 w-8 items-center justify-center rounded-full bg-[#ff98a2] text-[20px] leading-8 text-black">1</span>
        </div>
        <div className="-mt-[4px] ml-[7px] flex flex-col text-[24px] leading-8">
          <span className="tracking-[-0.900px] text-white">30°C</span>
          <span className="tracking-[-0.290px] text-[#c9c8c3]">Mostly cloudy</span>
        </div>
      </div>
      <div className="flex items-center gap-2">
        <TaskButton><StartIcon /></TaskButton>
        <div className="ml-[2px] flex h-16 w-[440px] items-center rounded-full border-2 border-[#505050] bg-[#404040] pl-[22px]">
          <svg viewBox="0 0 30 32" className="h-8 w-[30px]" fill="none">
            <circle cx="12.500" cy="13" r="11" stroke="#e4e6e8" strokeWidth="2.800" fill="#555" />
            <path d="M20.500 22l7.500 8" stroke="#c3c7ca" strokeWidth="3.600" strokeLinecap="round" />
          </svg>
          <span className="ml-5 text-[27px] leading-[60px] tracking-[-0.700px] text-[#d0d0d0]">Search</span>
          <span className="mr-[3px] ml-auto"><BalloonScene /></span>
        </div>
        <TaskButton><TaskViewIcon /></TaskButton>
        <TaskButton><ChatIcon /></TaskButton>
        <TaskButton mark="dot"><FolderIcon /></TaskButton>
        <TaskButton mark="dot"><EdgeIcon /></TaskButton>
        <TaskButton><StoreIcon /></TaskButton>
        <TaskButton><MyAsusIcon /></TaskButton>
        <TaskButton mark="active"><ChromeIcon /></TaskButton>
        <TaskButton mark="dot">
          <span className="flex h-12 w-12 items-center justify-center rounded-full bg-[#5865f2] text-[31px] text-white">
            <FaDiscord />
          </span>
          <span className="absolute top-[7px] left-[44px] flex h-7 w-7 items-center justify-center rounded-full bg-[#f05252] text-[21px] leading-7 font-semibold tracking-[-1px] text-white">9+</span>
        </TaskButton>
        <TaskButton mark="dot"><span className="ml-2"><TeamsIcon /></span></TaskButton>
        <TaskButton mark="dot"><NotepadIcon /></TaskButton>
      </div>
      <div className="ml-auto flex items-center pr-[43px] text-[24px] leading-8 text-white">
        <svg viewBox="0 0 22 12" className="h-3 w-[22px]" stroke="currentColor" strokeWidth="2.200" fill="none">
          <path d="M1 11L11 1l10 10" />
        </svg>
        <svg viewBox="0 0 33 28" className="mt-[4px] ml-[37px] h-7 w-[33px]">
          <circle cx="16" cy="9" r="9" fill="#8b8b8b" />
          <path d="M8 22a9 8.500 0 1 1 9-9v9z" fill="#c9c9c9" />
          <path d="M2 17l8-3 5 8H8q-4-1-6-5z" fill="#f5f5f5" />
          <circle cx="23.500" cy="18.500" r="9.500" fill="#60cdff" stroke="#222" strokeWidth="1" />
          <path d="M23.500 16.500v7M23.500 12v2.600" stroke="#111" strokeWidth="2.400" />
        </svg>
        <span className="-mt-[2px] ml-9 flex w-[46px] flex-col items-center">
          <span className="tracking-[-0.900px]">ENG</span>
          <span className="tracking-[-1px]">US</span>
        </span>
        <svg viewBox="0 0 34 24" className="ml-9 h-6 w-[34px]" fill="none" stroke="currentColor" strokeWidth="2.200">
          <path d="M1 9.500a22.500 22.500 0 0 1 32 0M6.500 14a15 15 0 0 1 21 0M11.500 18.200a8 8 0 0 1 11 0" />
          <circle cx="17" cy="20.500" r="2.700" fill="currentColor" stroke="none" />
        </svg>
        <svg viewBox="0 0 31 24" className="ml-[15px] h-6 w-[31px]" fill="none" stroke="currentColor" strokeWidth="2">
          <path d="M1.500 7.500h5l6-5.500v20l-6-5.500h-5z" strokeLinejoin="round" />
          <path d="M19 7l11 11M30 7L19 18" />
        </svg>
        <svg viewBox="0 0 32 20" className="ml-[17px] h-5 w-8" fill="none" stroke="currentColor" strokeWidth="2.200">
          <rect x="1.200" y="1.200" width="26" height="17.600" rx="4" />
          <path d="M4 4h8.500v12H6q-2 0-2-2z" fill="currentColor" stroke="none" />
          <path d="M28 6.500h1.500q2.500 0 2.500 3.500t-2.500 3.500H28z" fill="currentColor" stroke="none" />
        </svg>
        <span className="-mt-[5px] ml-7 flex w-[101px] flex-col items-end">
          <span className="tracking-[-0.680px]">2:26 PM</span>
          <span className="tracking-[-0.370px]">9/1/2024</span>
        </span>
        <svg viewBox="0 0 26 28" className="ml-[18px] h-7 w-[26px]" fill="none" stroke="currentColor" strokeWidth="2">
          <path d="M13 1.200c5.500 0 9 4 9 9v5.500l2.800 7.300H1.200L4 15.700v-5.500c0-5 3.500-9 9-9z" strokeLinejoin="round" />
          <path d="M9 23.500c.5 4.500 7.500 4.500 8 0" />
        </svg>
      </div>
    </div>
  );
}

export default function App() {
  return (
    <div className="flex h-[1800px] w-[2880px] flex-col overflow-hidden bg-white font-['Open_Sans','Noto_Sans',sans-serif]">
      <TabStrip />
      <Toolbar />
      <FigmaHeader />
      <main className="flex flex-1 flex-col">
        <Payment />
        <Controls />
      </main>
      <Taskbar />
    </div>
  );
}
